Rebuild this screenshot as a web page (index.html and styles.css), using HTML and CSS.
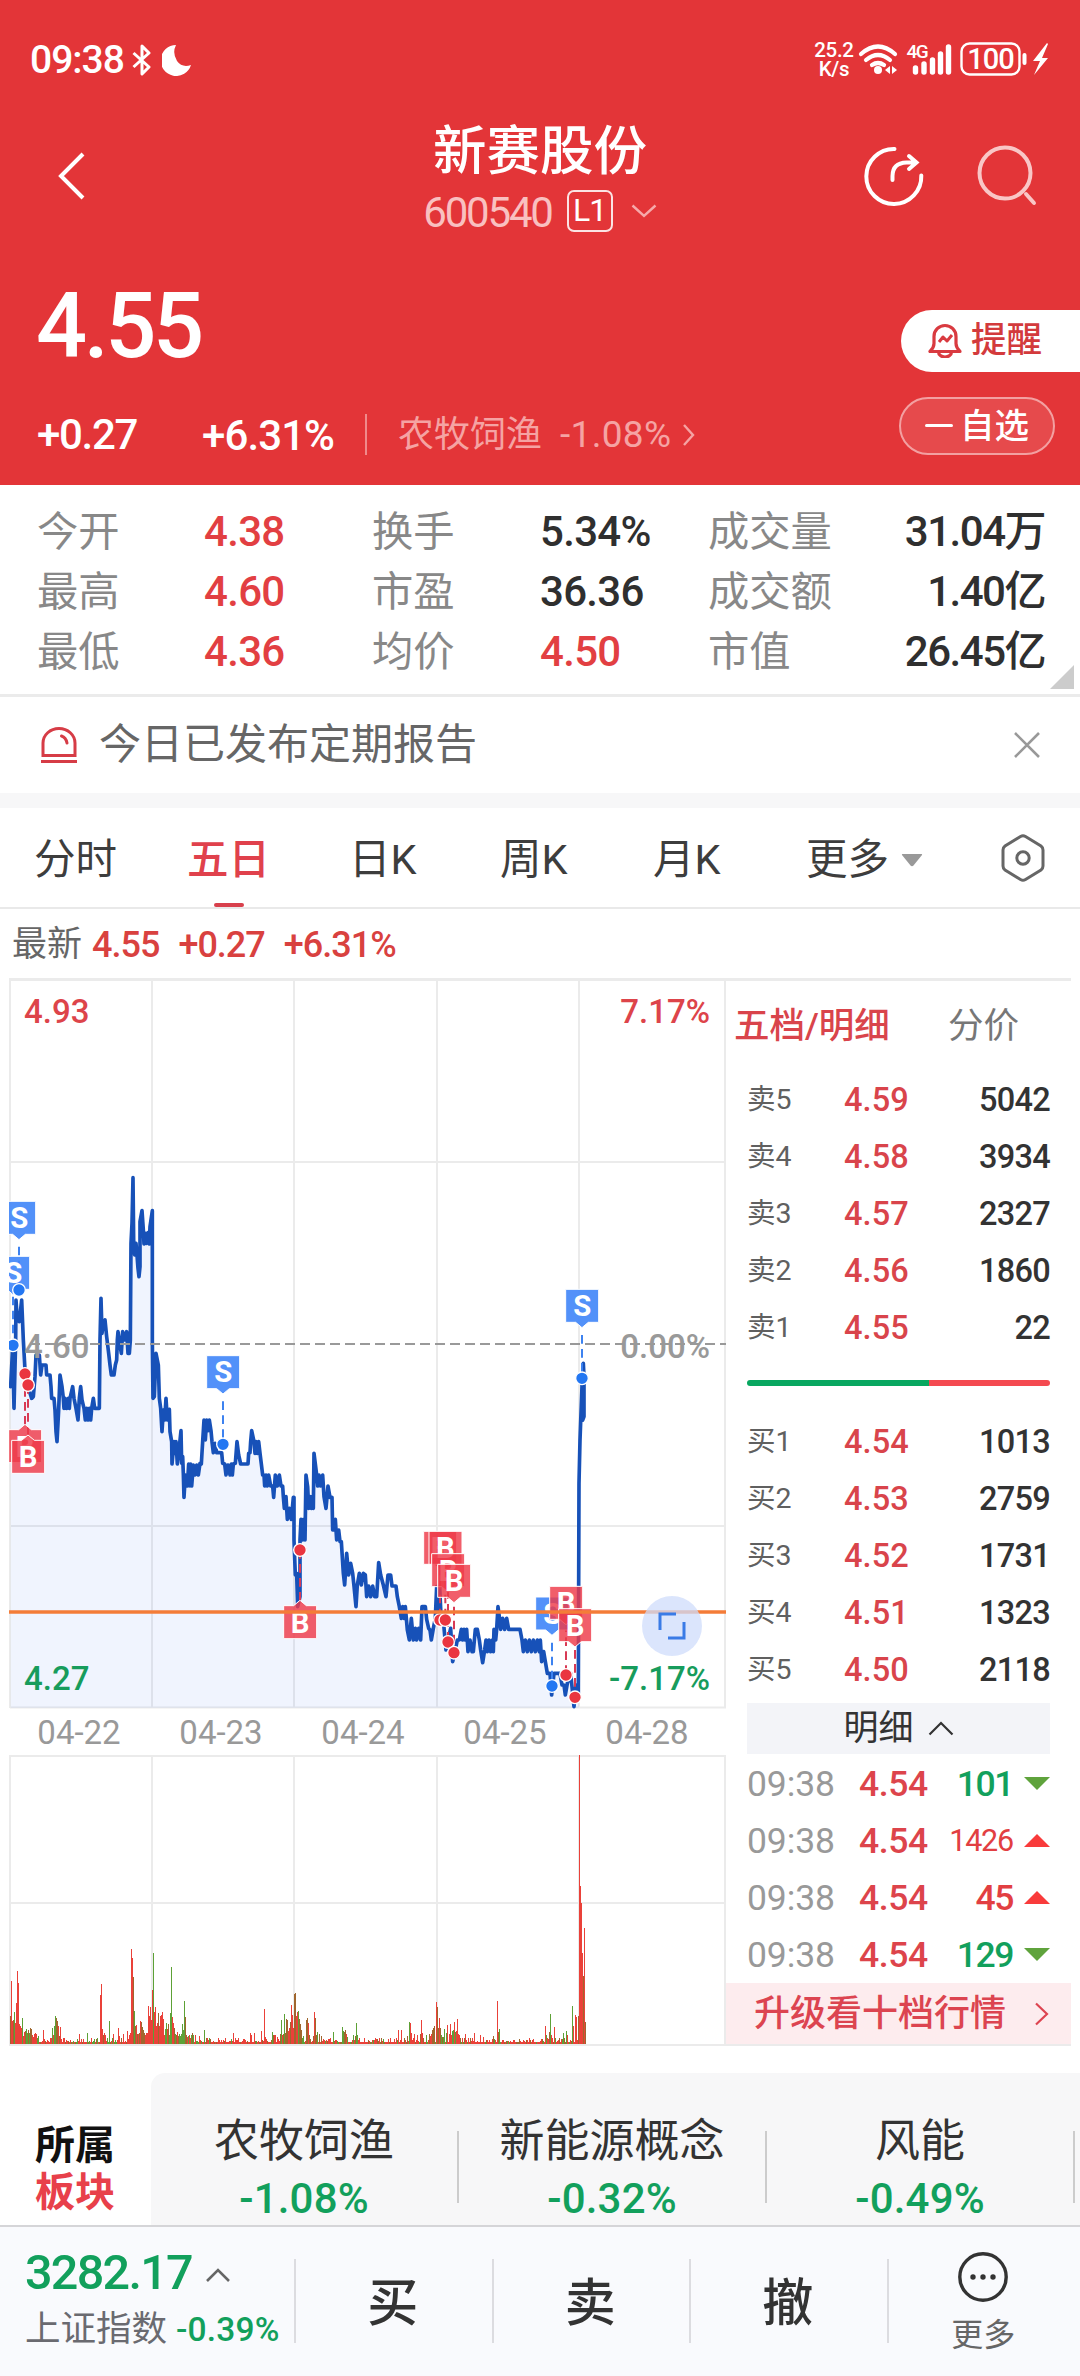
FILE: index.html
```html
<!DOCTYPE html>
<html lang="zh-CN">
<head>
<meta charset="utf-8">
<title>新赛股份 600540</title>
<link rel="stylesheet" href="styles.css">
</head>
<body>
<header class="hero">
  <div class="status">
    <span class="clock">09:38</span>
    <svg class="bt" width="20" height="32" viewBox="0 0 20 32"><path d="M1.5 9 17 23 10 30V2l7 7L1.5 23" fill="none" stroke="#fff" stroke-width="3" stroke-linejoin="round"/></svg>
    <svg class="moon" width="30" height="32" viewBox="0 0 30 32"><path d="M14 1A15.500 15.500 0 1 0 29 21Q20 24 15 17Q10 9 14 1Z" fill="#fff"/></svg>
    <span class="speed"><i>25.2</i><i>K/s</i></span>
    <svg class="net" width="195" height="50" viewBox="858 35 195 50" fill="none" stroke="#fff" stroke-linecap="round">
      <path d="M861 54Q878 39 895 54M866 60Q878 50 890 60M872 65Q878 61 884 65" stroke-width="4.200"/>
      <circle cx="878" cy="70" r="4" fill="#fff" stroke="none"/>
      <path d="M885 70l5-4v8zM897 70l-5-4v8z" fill="#fff" stroke="none"/>
      <path d="M915.500 68v4M924 64v8M932.500 60v12M940.500 54v18M948.500 47v25" stroke-width="5.400"/>
      <rect x="961.500" y="43.500" width="58" height="31" rx="8" stroke-width="2.400"/>
      <path d="M1024.500 55v8" stroke-width="4"/>
      <path d="M1047 43 1033 61h7l-6 14 14-17h-6l6-14z" fill="#fff" stroke="none"/>
      <text class="t4g" x="906.500" y="58">4G</text>
      <text class="tbat" x="990.500" y="69" text-anchor="middle">100</text>
    </svg>
  </div>
  <div class="titlebar">
    <svg class="back" width="30" height="50" viewBox="0 0 30 50"><path d="M26 3 4 25l22 22" fill="none" stroke="#fff" stroke-width="4"/></svg>
    <div class="title">
      <h1>新赛股份</h1>
      <div class="code"><span>600540</span><b>L1</b><svg width="26" height="14" viewBox="0 0 26 14"><path d="M1.500 1.500 13 12 24.500 1.500" fill="none" stroke="#f6a9aa" stroke-width="2.400"/></svg></div>
    </div>
    <svg class="actions" width="176" height="64" viewBox="862 144 176 64" fill="none" stroke-linecap="round">
      <g stroke="#fff" stroke-width="4"><path d="M894.500 149A27.500 27.500 0 1 0 921.300 175.500"/><path d="M892.500 180v-4q0-13 14-13.500h9M909 156l7.500 6.500-7.500 6.500"/></g>
      <g stroke="#f9c6c6" stroke-width="4"><circle cx="1005" cy="173" r="25.500"/><path d="M1026 194l8 9"/></g>
    </svg>
  </div>
  <div class="pricebar">
    <div class="price">4.55</div>
    <div class="alert"><svg width="34" height="36" viewBox="0 0 34 36" fill="none" stroke="#d93a40" stroke-width="3.200" stroke-linejoin="round"><path d="M2 29.500h30q-4-4-4-8v-7a11 11 0 0 0-22 0v7q0 4-4 8z"/><path d="M10.500 30a6.500 5 0 0 0 13 0"/><path d="M11 20l4-5 4 4 5-6" stroke-width="3"/></svg>提醒</div>
  </div>
  <div class="changebar">
    <span class="chg">+0.27</span><span class="pct">+6.31%</span>
    <span class="industry">农牧饲渔</span><span class="indpct">-1.08%</span>
    <svg class="indarr" width="14" height="24" viewBox="0 0 14 24"><path d="M2 2l9 10-9 10" fill="none" stroke="#f5a3a3" stroke-width="2.400"/></svg>
    <div class="fav"><i></i>自选</div>
  </div>
</header>

<section class="stats">
  <span>今开</span><em class="up">4.38</em><span>换手</span><em>5.34%</em><span>成交量</span><em class="r">31.04万</em>
  <span>最高</span><em class="up">4.60</em><span>市盈</span><em>36.36</em><span>成交额</span><em class="r">1.40亿</em>
  <span>最低</span><em class="up">4.36</em><span>均价</span><em class="up">4.50</em><span>市值</span><em class="r">26.45亿</em>
  <svg class="corner" width="24" height="24" viewBox="0 0 24 24"><path d="M24 0v24H0z" fill="#ccc"/></svg>
</section>

<section class="notice">
  <svg width="36" height="38" viewBox="0 0 36 38" fill="none" stroke="#d63c46" stroke-width="3"><path d="M2 29.500V17a16 14.500 0 0 1 32 0v12.500z"/><path d="M0 35.500h36"/><path d="M20.500 10q4.500 1.500 5.500 7" stroke-linecap="round"/></svg>
  <p>今日已发布定期报告</p>
  <svg width="28" height="28" viewBox="0 0 28 28"><path d="M2 2l24 24M26 2 2 26" stroke="#999" stroke-width="2.600"/></svg>
</section>

<nav class="tabs">
  <a>分时</a><a class="on">五日</a><a>日K</a><a>周K</a><a>月K</a><a class="more">更多<svg width="22" height="14" viewBox="0 0 22 14"><path d="M1.500 1h19q1 0 .5 1l-8.500 10.500q-1.500 1.500-3 0L1 2q-.5-1 .5-1z" fill="#999"/></svg></a>
  <svg class="hex" width="46" height="50" viewBox="0 0 46 50" fill="none" stroke="#666" stroke-width="3"><path d="M20.500 3.500q2.500-1.500 5 0l15.500 9.500q2 1.500 2 4v16q0 2.500-2 4l-15.500 9.500q-2.500 1.500-5 0L5 37q-2-1.500-2-4V17q0-2.500 2-4z"/><circle cx="23" cy="25" r="6.200"/></svg>
</nav>

<div class="latest"><span>最新</span><b>4.55</b><b>+0.27</b><b>+6.31%</b></div>

<main class="market">
  <div class="charts">
    <svg class="kline" width="728" height="731" viewBox="0 978 728 731">
      <defs>
        <clipPath id="plot"><rect x="9" y="978" width="719" height="731"/></clipPath>
        <g id="sell"><path d="M-49-99H50V0H19L0 16-19 0H-49z" fill="#4388f8" fill-opacity=".92" stroke="#fff" stroke-width="3"/><text class="mk" x="1" y="-19">S</text></g>
        <g id="buyUp"><path d="M-49 99H50V0H19L0-16-19 0H-49z" fill="#ee3a49" fill-opacity=".82" stroke="#fff" stroke-width="3"/><text class="mk" x="0" y="81">B</text></g>
        <g id="buyDn"><path d="M-49-99H50V0H19L0 16-19 0H-49z" fill="#ee3a49" fill-opacity=".82" stroke="#fff" stroke-width="3"/><text class="mk" x="0" y="-18">B</text></g>
      </defs>
      <path d="M9 979.500H728" stroke="#ebebeb" stroke-width="3"/>
      <path d="M10 980V1708M152 980V1708M294 980V1708M437 980V1708M579 980V1708M725 980V1708M10 1162H726M10 1526H726M10 1707.500H726" stroke="#ebebeb" stroke-width="2" fill="none"/>
      <g clip-path="url(#plot)">
        <g transform="translate(0 1340) scale(.33333)">
          <path id="area" fill="#3b78ee" fill-opacity=".08"/>
          <path id="trend" fill="none" stroke="#1751b8" stroke-width="11" stroke-linejoin="round" stroke-linecap="round"/>
        </g>
        <path d="M30 1344H726" stroke="#999" stroke-width="2" stroke-dasharray="10 5"/>
        <g transform="translate(0 1340) scale(.33333)">
          <g stroke="#3d82f0" stroke-width="6" stroke-dasharray="26 16" fill="none"><path d="M57-280V-150M39-130V17M669 184V313M1746-15V115M1656 908V1038"/></g>
          <g stroke="#d83a55" stroke-width="6" stroke-dasharray="26 16" fill="none"><path d="M75 102V255M84 135V285M900 630V782M1320 680V840M1336 680V840M1344 750V906M1362 800V938M1698 850V1005M1725 930V1072"/></g>
          <use href="#sell" x="57" y="-317"/><use href="#sell" x="39" y="-152"/><use href="#sell" x="669" y="146"/><use href="#sell" x="1746" y="-53"/><use href="#sell" x="1656" y="870"/>
          <use href="#buyUp" x="75" y="269"/><use href="#buyUp" x="84" y="301"/><use href="#buyUp" x="900" y="797"/>
          <use href="#buyDn" x="1320" y="673"/><use href="#buyDn" x="1336" y="673"/><use href="#buyDn" x="1344" y="740"/><use href="#buyDn" x="1362" y="772"/>
          <use href="#buyDn" x="1698" y="838"/><use href="#buyDn" x="1725" y="905"/>
          <g fill="#2377f2" stroke="#fff" stroke-width="4"><circle cx="57" cy="-150" r="19"/><circle cx="39" cy="16" r="19"/><circle cx="669" cy="313" r="19"/><circle cx="1746" cy="115" r="19"/><circle cx="1656" cy="1038" r="19"/></g>
          <g fill="#ea3540" stroke="#fff" stroke-width="4"><circle cx="75" cy="102" r="19"/><circle cx="84" cy="135" r="19"/><circle cx="900" cy="630" r="19"/><circle cx="1320" cy="840" r="19"/><circle cx="1336" cy="840" r="19"/><circle cx="1344" cy="906" r="19"/><circle cx="1362" cy="938" r="19"/><circle cx="1698" cy="1005" r="19"/><circle cx="1725" cy="1072" r="19"/></g>
        </g>
        <path d="M9 1612H726" stroke="#f47c38" stroke-width="3.400"/>
      </g>
      <circle cx="672" cy="1626" r="30" fill="#cfdcfb" fill-opacity=".75"/>
      <path d="M660 1630v-16h16M668 1638h16v-16" fill="none" stroke="#3a7be6" stroke-width="3"/>
      <g class="axis"><text class="up" x="24" y="1023">4.93</text><text class="up" x="710" y="1023" text-anchor="end">7.17%</text>
      <text x="24" y="1358">4.60</text><text x="710" y="1358" text-anchor="end">0.00%</text>
      <text class="dn" x="24" y="1690">4.27</text><text class="dn" x="710" y="1690" text-anchor="end">-7.17%</text></g>
    </svg>
    <div class="dates"><span>04-22</span><span>04-23</span><span>04-24</span><span>04-25</span><span>04-28</span></div>
    <svg class="volume" width="728" height="291" viewBox="0 1755 728 291">
      <path d="M9 1756H726M9 1903H726M9 2045H728M10 1756V2045M152 1756V2045M294 1756V2045M437 1756V2045M579 1756V2045M725 1756V2045" stroke="#ebebeb" stroke-width="2"/>
      <g id="bars"></g>
    </svg>
  </div>

  <aside class="book">
    <div class="booktabs"><span class="on">五档/明细</span><span>分价</span></div>
    <div class="row"><span>卖5</span><b>4.59</b><i>5042</i></div>
    <div class="row"><span>卖4</span><b>4.58</b><i>3934</i></div>
    <div class="row"><span>卖3</span><b>4.57</b><i>2327</i></div>
    <div class="row"><span>卖2</span><b>4.56</b><i>1860</i></div>
    <div class="row"><span>卖1</span><b>4.55</b><i>22</i></div>
    <div class="ratio"></div>
    <div class="row"><span>买1</span><b>4.54</b><i>1013</i></div>
    <div class="row"><span>买2</span><b>4.53</b><i>2759</i></div>
    <div class="row"><span>买3</span><b>4.52</b><i>1731</i></div>
    <div class="row"><span>买4</span><b>4.51</b><i>1323</i></div>
    <div class="row"><span>买5</span><b>4.50</b><i>2118</i></div>
    <div class="detail">明细<svg width="26" height="15" viewBox="0 0 26 15"><path d="M1.500 13.500 13 2l11.500 11.500" fill="none" stroke="#333" stroke-width="2.200"/></svg></div>
    <div class="tick"><span>09:38</span><b>4.54</b><i class="dn">101</i><u class="dnt"></u></div>
    <div class="tick"><span>09:38</span><b>4.54</b><i class="up sm">1426</i><u class="upt"></u></div>
    <div class="tick"><span>09:38</span><b>4.54</b><i class="up">45</i><u class="upt"></u></div>
    <div class="tick"><span>09:38</span><b>4.54</b><i class="dn">129</i><u class="dnt"></u></div>
    <div class="upgrade">升级看十档行情<svg width="15" height="24" viewBox="0 0 15 24"><path d="M2 1.500 13 12 2 22.500" fill="none" stroke="#dd4450" stroke-width="2.200"/></svg></div>
  </aside>
</main>

<section class="sectors">
  <div class="label"><div>所属</div><div class="red">板块</div></div>
  <div class="list">
    <div class="sector"><p>农牧饲渔</p><p class="dn">-1.08%</p></div>
    <div class="sector"><p>新能源概念</p><p class="dn">-0.32%</p></div>
    <div class="sector"><p>风能</p><p class="dn">-0.49%</p></div>
    <div class="edge"></div>
  </div>
</section>

<footer class="dock">
  <div class="index">
    <div class="ival">3282.17<svg width="26" height="16" viewBox="0 0 26 16"><path d="M2 14 13 3l11 11" fill="none" stroke="#666" stroke-width="2.600"/></svg></div>
    <div class="iname">上证指数<b>-0.39%</b></div>
  </div>
  <div class="trade">买</div><div class="trade">卖</div><div class="trade">撤</div>
  <div class="moreb">
    <svg width="54" height="54" viewBox="0 0 54 54"><circle cx="27" cy="27" r="23.200" fill="none" stroke="#333" stroke-width="3.400"/><g fill="#333"><circle cx="17" cy="27" r="2.700"/><circle cx="27" cy="27" r="2.700"/><circle cx="37" cy="27" r="2.700"/></g></svg>
    <span>更多</span>
  </div>
</footer>
<script src="chart.js"></script>
</body>
</html>
```

FILE: styles.css
```css
* { box-sizing: border-box; margin: 0; padding: 0; }
body {
  width: 1080px; height: 2376px; overflow: hidden; background: #fff; color: #333;
  font-family: Roboto, "Noto Sans CJK SC", sans-serif; font-size: 42px;
}
em, i, u { font-style: normal; text-decoration: none; }
b { font-weight: 500; }
svg { display: block; flex: none; }
.up { color: #e23f42; }
.dn { color: #12a05c; }

.hero { height: 485px; background: #e33538; color: #fff; }
.status { height: 110px; padding: 10px 0 0 30px; display: flex; align-items: center; }
.clock { width: 102px; font-size: 39px; font-weight: 500; letter-spacing: -1px; line-height: 100px; }
.moon { margin-left: 10px; }
.speed { width: 48px; margin-left: 618px; display: flex; flex-direction: column; font-size: 20.500px; line-height: 19px; font-weight: 500; text-align: center; letter-spacing: -.3px; }
.t4g { font-size: 19px; font-weight: 500; fill: #fff; stroke: none; letter-spacing: -1.500px; }
.tbat { font-size: 29px; font-weight: 500; fill: #fff; stroke: none; letter-spacing: -1px; }

.titlebar { height: 140px; padding: 0 42px 0 57px; display: flex; justify-content: space-between; align-items: flex-start; }
.back { margin-top: 41px; }
.title { display: flex; flex-direction: column; align-items: center; margin-left: 131px; }
.title h1 { font-size: 53.500px; font-weight: 500; line-height: 78px; margin-top: 3px; }
.code { display: flex; align-items: center; height: 52px; margin-top: -6px; color: #f9c0c0; letter-spacing: -2.200px; }
.code span { line-height: 52px; margin-top: 3px; }
.code b { width: 46px; height: 42px; margin: -1px 18px 0 15px; border: 2.500px solid #fbe3e3; border-radius: 7px; color: #fff; font-size: 32px; font-weight: 400; line-height: 37px; text-align: center; letter-spacing: -1px; }
.actions { margin-top: 34px; }

.pricebar { height: 134px; display: flex; justify-content: space-between; padding-left: 36px; }
.price { font-size: 90px; font-weight: 500; letter-spacing: -3.400px; line-height: 154px; }
.alert { width: 179px; height: 62px; margin-top: 60px; padding-left: 27px; display: flex; align-items: center; gap: 9px; background: #fff; border-radius: 31px 0 0 31px; color: #d33a3c; font-size: 35.500px; font-weight: 500; line-height: 60px; padding-bottom: 2px; }
.changebar { height: 101px; padding-left: 37px; display: flex; align-items: center; line-height: 104px; }
.chg { width: 165px; font-weight: 500; letter-spacing: -1.300px; }
.pct { width: 165px; height: 41px; line-height: 44px; border-right: 2px solid #f08a8b; font-weight: 500; letter-spacing: -.9px; }
.industry { margin-left: 31px; font-size: 36px; color: #f5a3a3; }
.indpct { margin-left: 18px; width: 116px; font-size: 37px; color: #f5a3a3; letter-spacing: .3px; }
.indarr { margin-left: 6px; }
.fav { width: 156px; height: 58px; margin: -18px 0 0 203px; display: flex; align-items: center; justify-content: center; border: 2px solid #f3a0a1; border-radius: 29px; background: #e64a4c; font-size: 34.500px; font-weight: 500; line-height: 54px; gap: 7px; }
.fav i { width: 28px; height: 3.500px; border-radius: 2px; background: #fff; }

.stats { position: relative; height: 212px; padding: 17px 37px 0; display: grid; grid-template-columns: 167px 168px 168px 168px 150px 1fr; grid-auto-rows: 60px; line-height: 60px; border-bottom: 3px solid #ebebeb; }
.stats span { font-size: 41.300px; color: #888; }
.stats em { font-weight: 500; letter-spacing: -.7px; }
.stats em:not(.up) { color: #2f2f2f; }
.stats .r { text-align: right; white-space: nowrap; letter-spacing: -1.500px; margin-right: -2px; }
.corner { position: absolute; right: 6px; bottom: 5px; }

.notice { height: 111px; padding: 0 39px 0 41px; display: flex; align-items: center; border-bottom: 15px solid #f7f7f8; }
.notice p { flex: 1; margin-left: 22px; font-size: 42px; color: #666; line-height: 92px; }

.tabs { height: 101px; padding-left: 34px; display: flex; line-height: 104px; font-size: 41.500px; color: #3d3d3d; border-bottom: 2px solid #e9e9e9; }
.tabs a { display: flex; width: 151px; height: 99px; }
.tabs a:first-child { width: 153px; }
.tabs a:nth-child(2) { width: 162px; }
.tabs .on { color: #e0414c; font-weight: 500; }
.tabs .on::after { content: ""; width: 30px; height: 4px; border-radius: 2px; background: #d8404c; align-self: flex-end; margin-left: -56px; }
.tabs a:nth-child(4) { width: 153px; }
.tabs a:nth-child(5) { width: 153px; }
.tabs .more { width: 196px; }
.tabs .more svg { margin: 45px 0 0 12px; }
.hex { margin-top: 25px; margin-left: -2px; }
.latest { height: 69px; padding-left: 12px; display: flex; line-height: 72px; font-size: 35px; color: #666; }
.latest span { width: 80px; }
.latest b { font-size: 36px; color: #d9413f; margin-right: 19px; letter-spacing: -1px; }

.market { display: flex; height: 1068px; }
.charts { width: 726px; height: 1068px; display: flex; flex-direction: column; }
.kline, .volume { overflow: visible; }
.axis { font-size: 33px; font-weight: 500; fill: #999; }
.axis .up { fill: #dd444a; }
.axis .dn { fill: #179c5c; }
.mk { font-size: 88px; font-weight: 700; fill: #fff; text-anchor: middle; }
.dates { height: 46px; padding-left: 8px; display: flex; line-height: 47px; font-size: 33px; color: #999; }
.dates span { width: 142px; text-align: center; }

.book { width: 345px; border-top: 3px solid #ebebeb; border-bottom: 2px solid #ebebeb; }
.booktabs { height: 90px; padding-left: 8px; display: flex; line-height: 91px; font-size: 35.500px; color: #777; }
.booktabs .on { width: 214px; color: #d9444b; font-weight: 500; }
.row { height: 57px; padding: 0 21px 0 21px; display: flex; align-items: center; line-height: 58px; font-size: 32.500px; }
.row span { width: 97px; font-size: 28.500px; color: #606060; }
.row b { color: #d9444b; flex: 1; letter-spacing: .1px; }
.row i { color: #333; font-weight: 500; letter-spacing: -.7px; }
.ratio { width: 303px; height: 6px; margin: 24px 0 27px 21px; border-radius: 3px; background: linear-gradient(90deg, #08a760 60%, #f44a50 60%); }
.detail { width: 303px; height: 51px; margin: 5px 0 0 21px; display: flex; align-items: center; justify-content: center; gap: 14px; background: #f3f4f8; font-size: 35px; line-height: 51px; }
.detail + .tick { margin-top: 1px; }
.tick { height: 57px; padding: 0 21px; display: flex; align-items: center; line-height: 58px; font-size: 35.500px; }
.tick span { width: 112px; color: #999; letter-spacing: -.1px; }
.tick b { color: #dd444b; letter-spacing: -.4px; }
.tick i { flex: 1; text-align: right; margin-right: 11px; font-weight: 500; letter-spacing: -1.400px; }
.tick .sm { font-size: 30.500px; font-weight: 400; letter-spacing: -1.200px; }
.tick u { width: 26px; height: 13px; }
.upt { background: #f93b3b; clip-path: polygon(50% 0, 100% 100%, 0 100%); }
.dnt { background: #5fa33c; clip-path: polygon(0 0, 100% 0, 50% 100%); }
.upgrade { height: 61px; padding: 0 22px 0 28px; display: flex; align-items: center; justify-content: space-between; background: #fdecee; color: #dc4450; font-size: 36px; line-height: 62px; font-weight: 500; }

.sectors { height: 179px; padding-top: 27px; display: flex; }
.label { width: 151px; padding: 49px 0 0 35px; font-size: 40px; font-weight: 700; color: #111; line-height: 47px; }
.label .red { color: #e8404a; }
.list { flex: 1; display: flex; overflow: hidden; background: #f7f7f8; border-radius: 14px 0 0 0; }
.sector { flex: none; width: 308px; padding-top: 39px; padding-right: 2px; text-align: center; font-size: 45px; line-height: 60px; background: linear-gradient(#ccc, #ccc) 306px 58px / 2px 72px no-repeat; }
.sector .dn { font-size: 42px; font-weight: 500; line-height: 54px; letter-spacing: .2px; }

.dock { height: 152px; display: flex; background: #f9fafd; border-top: 2px solid #d5d5d8; }
.index { width: 294px; padding: 15px 0 0 25px; white-space: nowrap; }
.ival { height: 62px; display: flex; align-items: center; font-size: 48.500px; font-weight: 500; line-height: 62px; color: #12a05c; letter-spacing: -1.700px; }
.ival svg { margin: 4px 0 0 13px; }
.iname { font-size: 35.500px; color: #6a6a70; line-height: 50px; }
.iname b { font-size: 33.500px; color: #12a05c; margin-left: 9px; letter-spacing: .2px; }
.trade { width: 197.500px; text-align: center; font-size: 51px; font-weight: 500; line-height: 154px; height: 150px; background: linear-gradient(#dcdce0, #dcdce0) 0 32px / 2px 84px no-repeat; }
.moreb { flex: 1; padding-top: 23px; display: flex; flex-direction: column; align-items: center; font-size: 32px; color: #666; background: linear-gradient(#dcdce0, #dcdce0) 0 32px / 2px 84px no-repeat; }
.moreb span { line-height: 44px; margin-top: 9px; }
```

FILE: chart.js
```js
// Five-day price line, x and y in thirds of a pixel, y measured from the row at 1340.
const left = `32,140 38,20 42,205 47,0 48,-120 52,-60 58,-55 65,-120 70,0 75,90 84,140 95,175 100,170 105,110 108,45 118,45 122,105
126,75 138,75 140,105 150,105 153,140 155,175 162,175 165,210 168,275 171,305 176,210 180,105 186,140 190,175 192,205 195,175 200,205
205,175 208,205 210,175 218,140 222,175 228,205 234,240 238,175 242,140 246,180 252,205 256,240 260,205 264,240 268,205 272,240 275,205
280,175 284,205 298,205 300,0 303,-125 306,-20 310,-50 315,-60 320,-10 326,40 330,75 334,105 342,105 346,75 350,60 352,0 354,-25 360,15
364,40 368,-25 374,0 380,-25 384,40 388,40 391,0 393,-290 396,-350 399,-487 401,-300 404,-255 408,-290 411,-255 414,-215 417,-190 420,-220
420,-355 426,-388 430,-330 432,-288 436,-320 440,-290 444,-322 448,-288 450,-340 457,-388 457,0 459,175 463,170 468,40 475,75 478,175
482,205 486,275 490,210 494,240 498,175 502,240 508,208 510,275 515,305 516,372 522,305 526,340 528,305 532,372 536,340 543,272 545,370
548,350 550,400 552,472 556,405 562,438 566,372 570,438 572,372 575,438 580,375 585,405 590,375 595,405 600,370 604,372 608,305 612,240
616,300 620,240 624,272 628,240 633,272 636,305 640,338 645,310 650,338 665,338 668,370 674,372 678,405 684,375 690,405 694,372 697,405
700,372 706,370 711,305 716,345 722,372 744,372 746,340 750,338 752,305 755,272 762,305 765,340 768,305 772,340 776,305 780,340 784,372
788,405 792,405 794,438 798,405 802,438 806,405 812,438 818,438 821,472 826,405 832,438 838,405 843,438 848,438 850,470 853,505 858,470
862,538 868,505 874,538 880,472 882,472 882,600 886,705 890,700 893,800 900,770 900,600 903,538 907,600 911,538 915,600 918,405 923,440
926,505 930,470 934,505 936,470 940,505 942,340 946,372 950,405 953,438 957,405 962,438 968,405 972,470 978,505 984,438 990,472 996,472
998,570 1003,570 1006,538 1010,600 1016,570 1020,605 1024,605 1030,700 1034,735 1040,640 1046,705 1052,670 1058,700 1062,738 1068,800
1072,735 1078,700 1084,735 1090,700 1096,705 1100,770 1106,738 1112,770 1118,738 1124,770 1130,770 1132,738 1136,668`;
const right = `62,705 70,735 78,770 84,705 92,705 96,738 102,738 108,738 112,770 118,800 124,835 128,800 132,835 136,800 142,870 148,900
154,835 160,900 166,865 170,900 176,865 182,900 186,800 196,800 200,838 206,865 210,870 214,900 220,865 226,835 230,740 235,850 239,740
244,850 249,830 258,930 264,900 272,865 278,965 284,940 292,900 298,900 304,868 308,900 312,868 316,900 320,868 324,935 330,900 336,935
340,935 346,868 352,868 358,900 362,930 368,968 374,930 378,900 382,935 387,900 392,935 397,900 400,935 402,868 407,900 410,868 414,800
418,830 422,868 428,835 434,868 440,835 446,868 474,868 480,868 486,900 490,935 496,900 502,935 508,900 514,935 520,900 526,935 532,900
538,935 541,900 545,965 551,935 556,965 562,1000 570,1000 575,1065 582,1000 600,1000 606,1035 612,1035 616,1065 622,1030 632,1000
638,1060 642,1100 648,1035 655,1060 657,430 660,300 666,140 670,70 672,110 672,230 668,240`;
const shifted = right.trim().split(/\s+/).map(p => {
  const [x, y] = p.split(',');
  return (+x + 1080) + ',' + y;
}).join(' ');
const points = left + ' ' + shifted;
document.getElementById('trend').setAttribute('d', 'M' + points);
document.getElementById('area').setAttribute('d', 'M32,1103 L' + points + ' L1748,245 L1737,245 L1737,1103Z');

// Volume bars: notable minutes as x:height+colour, the quiet ones filled from a small generator.
const colours = { r: '#ea4139', g: '#5da136', b: '#a0662e' };
const spikes = `10:28b 11:63r 12:23r 13:24b 14:32g 15:21r 16:41r 17:73r 18:61r 19:20r 20:18r 21:16r 22:26g 23:8r 24:12r 25:13b 26:15g
27:11g 28:14b 29:11g 30:16b 31:15b 32:9r 33:7r 34:10r 35:11r 36:10r 37:6g 38:8g 43:14r 51:6r 52:16g 53:9r 54:18g 55:28g 56:26b 57:23b
58:18r 59:8b 60:17r 79:10r 87:11g 100:49r 101:60r 102:15r 103:9b 104:11r 105:9r 109:23g 113:10r 118:16r 119:8r 123:10r 127:13r 129:9r
130:11r 131:95r 132:86r 133:67b 134:33g 135:18b 136:19r 137:10b 138:10r 139:11b 140:23r 141:22b 142:17b 143:14b 144:11b 145:9r 146:11r
147:11r 148:38r 149:28r 150:37r 151:24r 152:54r 153:91g 154:32r 155:37r 156:18r 157:21r 158:31b 159:18r 160:28r 161:29r 162:32r 163:25r
164:9r 165:15g 166:21g 167:15r 168:20b 169:9g 170:31g 171:77g 172:27r 173:21r 174:16b 175:10g 176:9b 177:12r 178:8b 179:10g 180:8g
181:10g 182:20g 183:14g 184:43g 185:27b 186:9b 187:7r 188:8g 189:9r 191:9g 192:11b 193:9g 195:9r 199:8r 204:14g 206:6b 233:11r 250:11r
251:9r 254:11r 261:13r 264:35r 265:7r 272:12g 273:9b 274:9r 275:9r 277:7r 280:10b 281:24g 282:9r 283:10b 284:30g 285:11b 286:25b
287:24b 288:13r 289:16r 290:22b 291:39r 292:29r 293:16r 294:50b 295:51b 296:28r 297:32r 298:33g 299:25b 300:20b 301:14b 302:6g 303:8g
306:24b 307:26b 308:21r 309:9b 313:8b 314:32r 315:26b 316:9b 317:12g 319:10b 321:8b 333:12g 342:17g 343:13g 344:12b 345:14b 346:10r
347:7g 353:9g 355:8b 356:21g 357:9g 398:14r 401:14r 407:8b 409:22g 410:21r 411:11r 414:10r 417:9r 420:10b 421:24r 422:11r 426:9g
429:10b 430:8r 431:10r 432:14b 433:16b 434:18b 436:42r 437:37b 438:16b 439:26r 440:16b 441:9g 442:7b 443:7g 444:15g 446:11g 447:19r
449:10r 450:20r 451:9r 452:13g 453:14g 454:22r 455:12g 456:13r 457:25r 458:10r 459:9r 465:10r 474:11r 480:9r 483:7r 493:8b 497:43r
498:12b 499:15g 545:18r 546:9g 549:12b 550:30g 551:9r 554:17r 563:11g 566:13g 567:9r 572:38g 573:18r 575:29r 576:27r 578:28b 579:289r
580:158r 581:141r 582:91r 583:68b 584:116r 585:22b`;
const table = {};
spikes.split(/\s+/).forEach(s => {
  const m = s.match(/(\d+):(\d+)(\w)/);
  table[m[1]] = [+m[2], m[3]];
});
let seed = 41;
const next = () => (seed = (seed * 16807) % 2147483647) / 2147483647;
const paths = { r: '', g: '', b: '' };
for (let x = 10; x <= 585; x++) {
  const n = next(), c = next();
  const [h, k] = table[x] || [2 + Math.floor(n * n * 5), c < .62 ? 'r' : c < .82 ? 'b' : 'g'];
  paths[k] += 'M' + x + ' 2044v-' + h + 'h1v' + h + 'z';
}
document.getElementById('bars').innerHTML =
  Object.keys(paths).map(k => '<path fill="' + colours[k] + '" d="' + paths[k] + '"/>').join('');
```
